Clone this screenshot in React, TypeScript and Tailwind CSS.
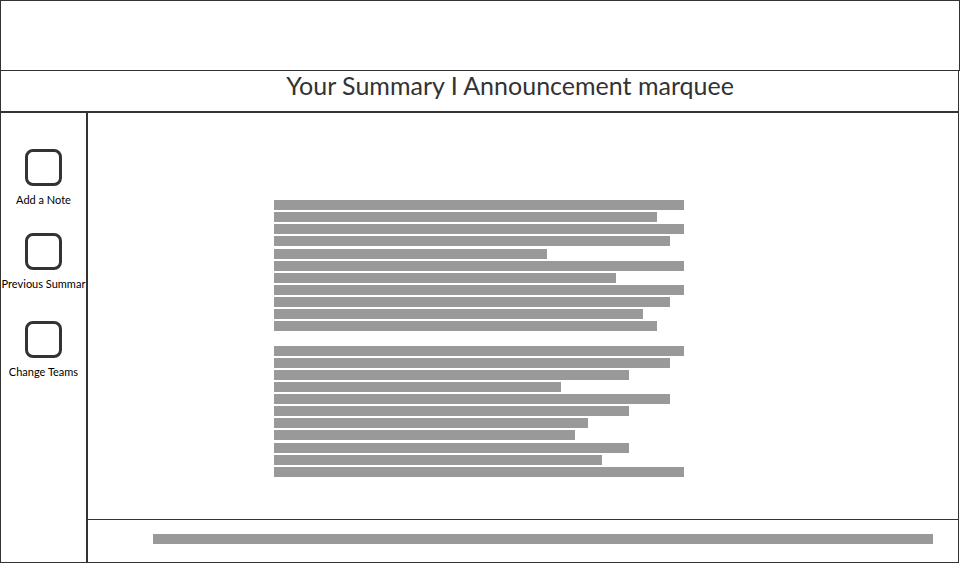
import React from "react";

const actions = ["Add a Note", "Previous Summar", "Change Teams"];

// Width of each placeholder line in pixels; 0 is the break between paragraphs.
const lines = [
  410, 383, 410, 396, 273, 410, 342, 410, 396, 369, 383, 0,
  410, 396, 355, 287, 396, 355, 314, 301, 355, 328, 410,
];

export default function App() {
  return (
    <div className="flex min-h-screen flex-col bg-white font-['Lato',sans-serif] text-[#333333]">
      <header className="h-[71px] shrink-0 border border-[#333333]" />
      <div className="mr-px flex grow flex-col border-x border-b border-[#333333]">
        <div className="h-[42px] shrink-0 border-b-2 border-[#333333] text-center">
          <h1 className="pl-[62px] pr-px text-[25px] leading-7 whitespace-nowrap">
            Your Summary I Announcement marquee
          </h1>
        </div>
        <div className="flex grow">
          <nav className="flex w-[87px] shrink-0 flex-col border-r-2 border-[#333333] pt-9">
            {actions.map((label) => (
              <button
                key={label}
                type="button"
                className="mb-[25px] flex flex-col items-center gap-1.5 last:mt-1"
              >
                <span className="size-[37px] rounded-lg border-3 border-[#333333]" />
                <span className="text-[11px] leading-4 whitespace-nowrap text-black">
                  {label}
                </span>
              </button>
            ))}
          </nav>
          <div className="flex min-w-0 grow flex-col">
            <main className="grow pt-[87px] pl-[186px]">
              <div className="flex h-[277px] flex-col justify-between">
                {lines.map((width, i) => (
                  <div key={i} className="h-[10px] bg-[#999999]" style={{ width }} />
                ))}
              </div>
            </main>
            <footer className="h-[43px] shrink-0 border-t border-[#333333] pt-[14px] pr-[25px] pl-[65px]">
              <div className="h-[10px] bg-[#999999]" />
            </footer>
          </div>
        </div>
      </div>
    </div>
  );
}
